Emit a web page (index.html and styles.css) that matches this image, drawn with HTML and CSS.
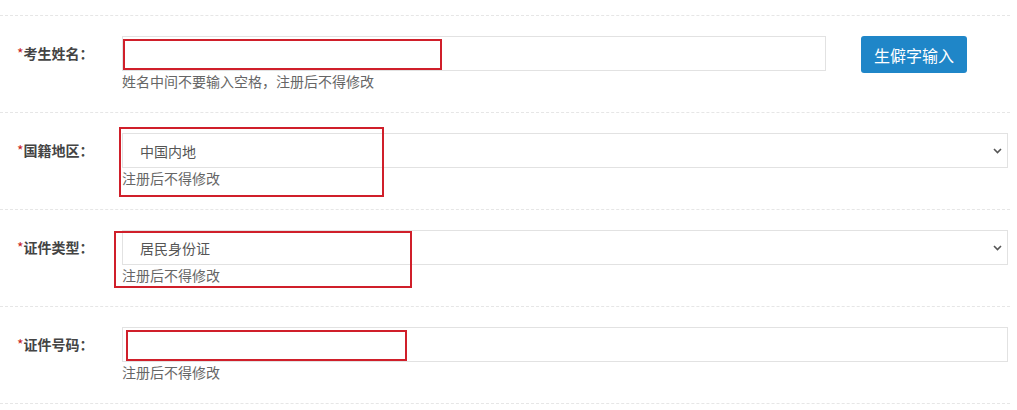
FILE: index.html
```html
<!DOCTYPE html>
<html lang="zh-CN">
<head>
<meta charset="utf-8">
<title>注册</title>
<link rel="stylesheet" href="styles.css">
</head>
<body>
<div class="form">
  <div class="lead"></div>

  <div class="row">
    <div class="label"><span class="req">*</span>考生姓名：</div>
    <div class="field field-short">
      <input class="control" type="text">
      <div class="hint">姓名中间不要输入空格，注册后不得修改</div>
      <div class="mark mark-1"></div>
    </div>
    <button class="btn" type="button">生僻字输入</button>
  </div>

  <div class="row">
    <div class="label"><span class="req">*</span>国籍地区：</div>
    <div class="field">
      <div class="select-wrap">
        <select class="control select"><option>中国内地</option></select>
        <svg class="chev" width="9" height="6" viewBox="0 0 9 6"><path d="M1 1l3.5 3.5L8 1" fill="none" stroke="#555" stroke-width="1.6"/></svg>
      </div>
      <div class="hint">注册后不得修改</div>
      <div class="mark mark-2"></div>
    </div>
  </div>

  <div class="row">
    <div class="label"><span class="req">*</span>证件类型：</div>
    <div class="field">
      <div class="select-wrap">
        <select class="control select"><option>居民身份证</option></select>
        <svg class="chev" width="9" height="6" viewBox="0 0 9 6"><path d="M1 1l3.5 3.5L8 1" fill="none" stroke="#555" stroke-width="1.6"/></svg>
      </div>
      <div class="hint">注册后不得修改</div>
      <div class="mark mark-3"></div>
    </div>
  </div>

  <div class="row">
    <div class="label"><span class="req">*</span>证件号码：</div>
    <div class="field">
      <input class="control" type="text">
      <div class="hint">注册后不得修改</div>
      <div class="mark mark-4"></div>
    </div>
  </div>
</div>
</body>
</html>
```
FILE: styles.css
```css
* { box-sizing: border-box; }
html, body { margin: 0; padding: 0; background: #fff; }
body {
  font-family: "Noto Sans CJK SC", "Noto Sans", sans-serif;
  font-size: 14px;
  color: #333;
}
.form { width: 1010px; }
.lead { height: 16px; border-bottom: 1px dashed #e6e6e6; }
.row {
  display: flex;
  align-items: flex-start;
  padding: 20px 0 21px;
  border-bottom: 1px dashed #e6e6e6;
}
.label {
  width: 122px;
  padding-left: 17px;
  line-height: 35px;
  font-weight: bold;
  color: #444;
  white-space: nowrap;
}
.req { color: #c81e1e; font-weight: normal; }
.field {
  position: relative;
  width: 886px;
}
.field-short { width: 704px; }
.control {
  display: block;
  width: 100%;
  height: 35px;
  margin: 0;
  border: 1px solid #e2e2e2;
  border-radius: 0;
  background: #fff;
  font-family: inherit;
  font-size: 14px;
  color: #555;
  outline: none;
}
.select-wrap { position: relative; }
.select {
  appearance: none;
  -webkit-appearance: none;
  padding: 0 0 0 17px;
}
.chev { position: absolute; right: 6px; top: 15px; }
.hint {
  line-height: 20px;
  color: #666;
  font-size: 14px;
}
.btn {
  margin-left: 35px;
  width: 106px;
  height: 37px;
  border: 0;
  border-radius: 3px;
  background: #1f86c8;
  color: #fff;
  font-family: inherit;
  font-size: 16px;
  padding: 0;
}
.mark {
  position: absolute;
  border: 2px solid #d01f2a;
  pointer-events: none;
}
.mark-1 { left: 1px; top: 3px; width: 319px; height: 31px; }
.mark-2 { left: -3px; top: -6px; width: 265px; height: 70px; }
.mark-3 { left: -8px; top: 1px; width: 298px; height: 57px; }
.mark-4 { left: 4px; top: 3px; width: 281px; height: 31px; }
```
